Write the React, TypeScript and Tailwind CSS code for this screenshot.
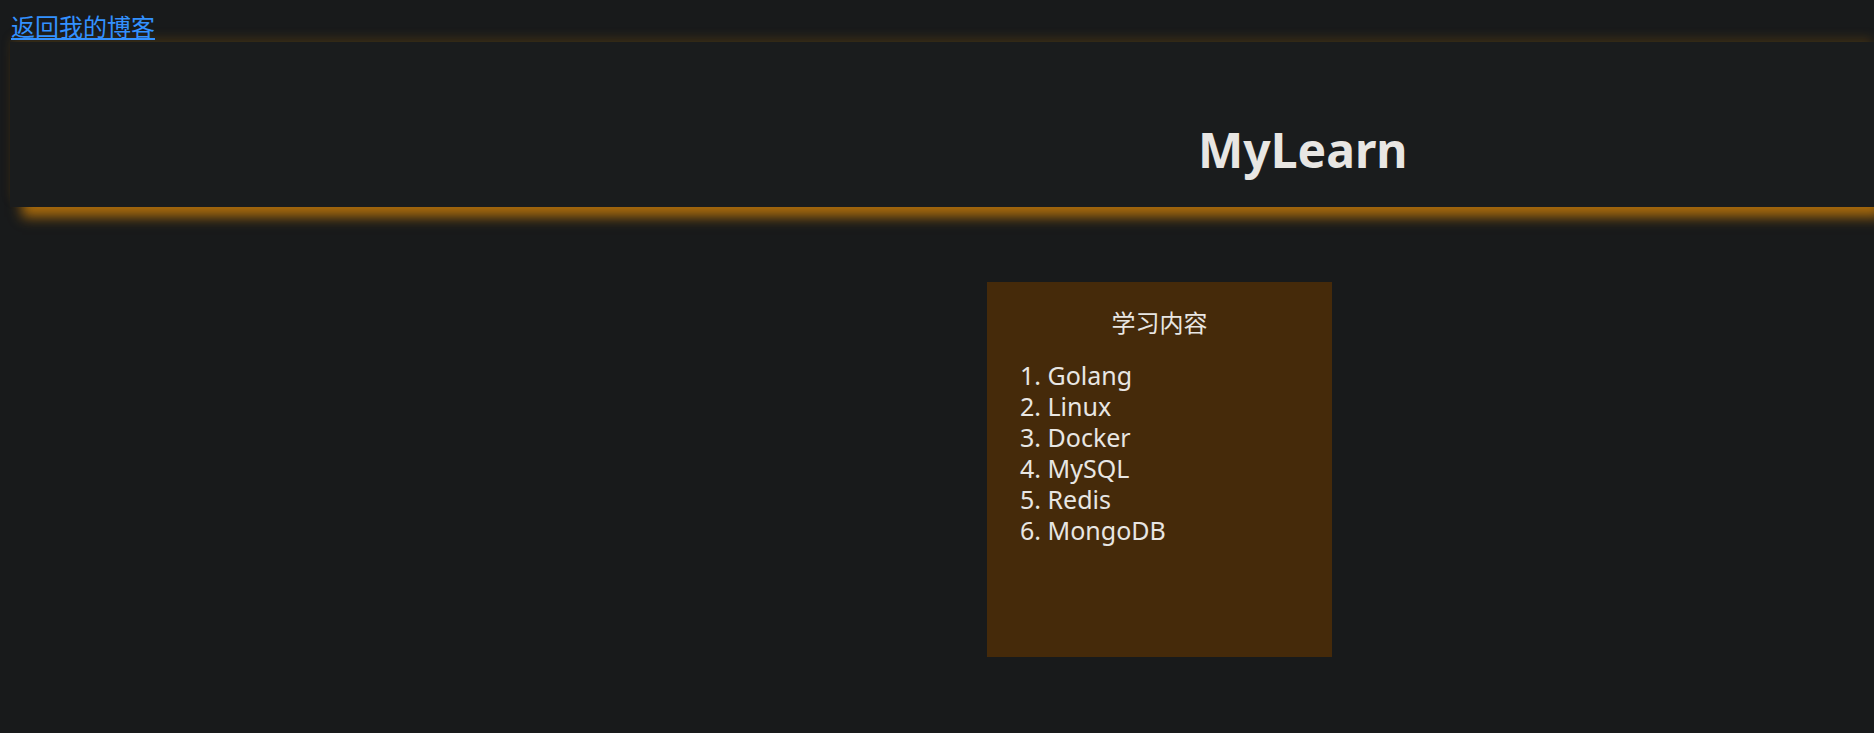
export default function App() {
  const items = ['Golang', 'Linux', 'Docker', 'MySQL', 'Redis', 'MongoDB']
  return (
    <div
      className="min-h-[733px] bg-[#181a1b] text-[#e8e6e3] overflow-hidden"
      style={{ fontFamily: '"Noto Sans", "Noto Sans CJK SC", sans-serif' }}
    >
      <div className="pl-[11px] pt-[12px] h-[42px]">
        <a href="#" className="text-[24px] leading-[30px] text-[#3391ff] underline">
          返回我的博客
        </a>
      </div>

      <header className="ml-[10px] h-[165px] bg-[#1a1c1d] flex items-center shadow-[10px_12px_12px_-2px_#a86a0c,0_-6px_10px_-2px_rgba(168,106,12,0.25)]">
        <h1 className="ml-[1188px] mt-[50px] text-[48px] font-bold leading-none">MyLearn</h1>
      </header>

      <div className="ml-[987px] mt-[75px] w-[345px] h-[375px] bg-[#452a0a] pt-[26px]">
        <h2 className="text-center text-[24px] leading-[30px]">学习内容</h2>
        <ol className="list-decimal list-inside pl-[33px] mt-[22px] text-[25px] leading-[31px]">
          {items.map((item) => (
            <li key={item}>{item}</li>
          ))}
        </ol>
      </div>
    </div>
  )
}
